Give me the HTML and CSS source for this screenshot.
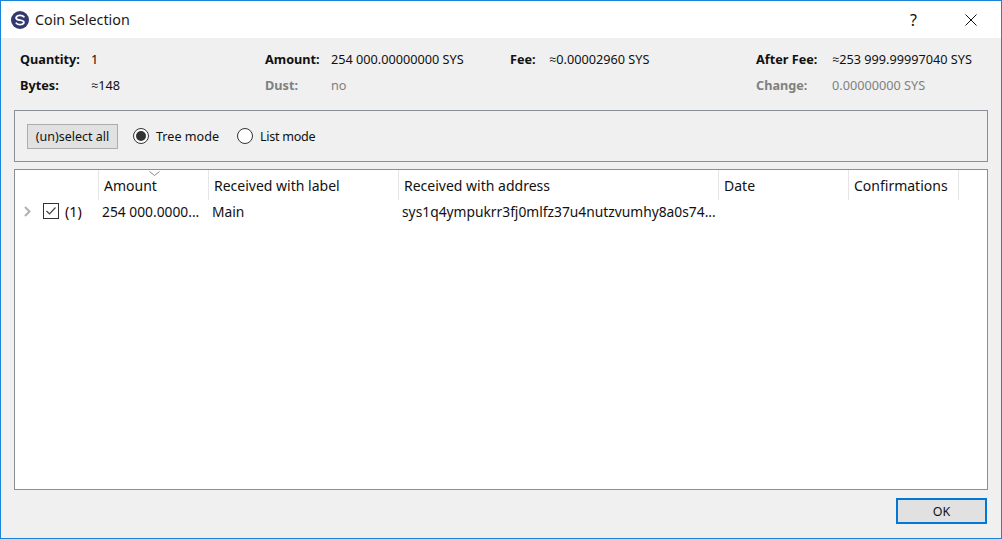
FILE: index.html
```html
<!DOCTYPE html>
<html lang="en">
<head>
<meta charset="utf-8">
<title>Coin Selection</title>
<link rel="stylesheet" href="styles.css">
</head>
<body>
<div class="window">
  <header class="titlebar">
    <svg class="app-icon" width="18" height="18" viewBox="0 0 18 18">
      <circle cx="9" cy="9" r="9" fill="#33386e"/>
      <path d="M13.4 6.400C12 3.900 6.600 3.700 5.200 6.200C4.300 8.400 7.400 8.900 9 9.200C10.800 9.500 13.700 10 12.800 12C11.400 14.400 6.400 14.200 4.800 11.600" fill="none" stroke="#fff" stroke-width="1.800"/>
    </svg>
    <span class="title">Coin Selection</span>
    <span class="help">?</span>
    <svg class="close" width="12" height="12" viewBox="0 0 12 12"><path d="M.5.500l11 11M11.500.500l-11 11" stroke="#111" stroke-width="1" fill="none"/></svg>
  </header>
  <main class="body">
    <section class="summary">
      <b>Quantity:</b><span class="v-dark">1</span>
      <b>Amount:</b><span>254 000.00000000 SYS</span>
      <b>Fee:</b><span>≈0.00002960 SYS</span>
      <b>After Fee:</b><span>≈253 999.99997040 SYS</span>
      <b>Bytes:</b><span>≈148</span>
      <b class="off">Dust:</b><span class="off">no</span>
      <span></span><span></span>
      <b class="off">Change:</b><span class="off">0.00000000 SYS</span>
    </section>
    <section class="modes">
      <button class="btn">(un)select all</button>
      <label class="radio"><i class="dot on"></i>Tree mode</label>
      <label class="radio"><i class="dot"></i>List mode</label>
    </section>
    <section class="tree">
      <div class="head">
        <div class="hc c0"></div>
        <div class="hc c1"><svg class="sort" width="11" height="5" viewBox="0 0 11 5"><path d="M.5.500l5 4 5-4" fill="none" stroke="#888"/></svg>Amount</div>
        <div class="hc c2">Received with label</div>
        <div class="hc c3">Received with address</div>
        <div class="hc c4">Date</div>
        <div class="hc c5">Confirmations</div>
      </div>
      <div class="row">
        <div class="cell c0 first">
          <svg class="arrow" width="7" height="11" viewBox="0 0 7 11"><path d="M1 1l4.500 4.500L1 10" fill="none" stroke="#b0b0b0" stroke-width="2"/></svg>
          <svg class="check" width="16" height="16" viewBox="0 0 16 16"><rect x=".5" y=".5" width="15" height="15" fill="#fff" stroke="#333"/><path d="M3.500 8l3 3 6-6.500" fill="none" stroke="#444" stroke-width="1.200"/></svg>
          <span class="count">(1)</span>
        </div>
        <div class="cell c1">254 000.0000...</div>
        <div class="cell c2">Main</div>
        <div class="cell c3">sys1q4ympukrr3fj0mlfz37u4nutzvumhy8a0s74...</div>
      </div>
    </section>
    <footer class="actions"><button class="btn ok">OK</button></footer>
  </main>
</div>
</body>
</html>
```
FILE: styles.css
```css
* { box-sizing: border-box; }
html, body { margin: 0; height: 100%; }
body { font: 13px "Noto Sans", "Open Sans", sans-serif; color: #111; }
.window { width: 1002px; height: 539px; display: flex; flex-direction: column; border: 1px solid #1a84d8; background: #f0f0f0; overflow: hidden; }
.titlebar { height: 37px; flex: none; background: #fff; display: flex; align-items: center; padding: 0 24px 0 10px; }
.app-icon { margin-right: 6px; }
.title { font-size: 14.300px; color: #1a1a1a; flex: 1; }
.help { font-size: 16px; margin-right: 48px; }
.close { display: block; }
.body { flex: 1; display: flex; flex-direction: column; padding: 8px 13px 14px; min-height: 0; }
.summary { display: grid; grid-template-columns: 71px 174px 66px 179px 39px 207px 76px 1fr; grid-auto-rows: 26px; align-items: center; padding-left: 6px; height: 64px; font-size: 12.700px; flex: none; }
.summary b { font-weight: 700; }
.off { color: #808080; }
.v-dark { color: #300; }
.modes { height: 52px; border: 1px solid #8a8f95; display: flex; align-items: center; padding-left: 12px; flex: none; }
.btn { font: inherit; font-size: 12.500px; color: #111; background: #e1e1e1; border: 1px solid #adadad; height: 25px; width: 91px; padding: 0; }
.radio { display: flex; align-items: center; font-size: 12.600px; margin-left: 15px; }
.radio + .radio { margin-left: 18px; letter-spacing: -0.300px; }
.dot { width: 16px; height: 16px; border-radius: 50%; border: 1px solid #333; background: #fff; margin-right: 7px; display: flex; align-items: center; justify-content: center; }
.dot.on::after { content: ""; width: 10px; height: 10px; border-radius: 50%; background: #333; }
.tree { flex: 1; margin-top: 7px; border: 1px solid #8a8f95; background: #fff; min-height: 0; }
.head, .row { display: flex; }
.head { height: 30px; }
.hc { height: 30px; line-height: 32px; padding-left: 5px; border-right: 1px solid #e5e5e5; font-size: 14px; position: relative; }
.c0 { width: 84px; }
.c1 { width: 110px; }
.c2 { width: 190px; }
.c3 { width: 320px; }
.c4 { width: 130px; }
.c5 { width: 110px; }
.sort { position: absolute; left: 50px; top: 1px; }
.row { height: 22px; align-items: center; font-size: 13.800px; }
.cell { padding-left: 3px; white-space: nowrap; }
.first { display: flex; align-items: center; padding-left: 9px; }
.check { margin-left: 12px; }
.count { margin-left: 6px; color: #300; font-size: 14.400px; }
.actions { flex: none; display: flex; justify-content: flex-end; padding: 8px 1px 0 0; }
.ok { width: 91px; height: 26px; border: 2px solid #0078d7; }
```
